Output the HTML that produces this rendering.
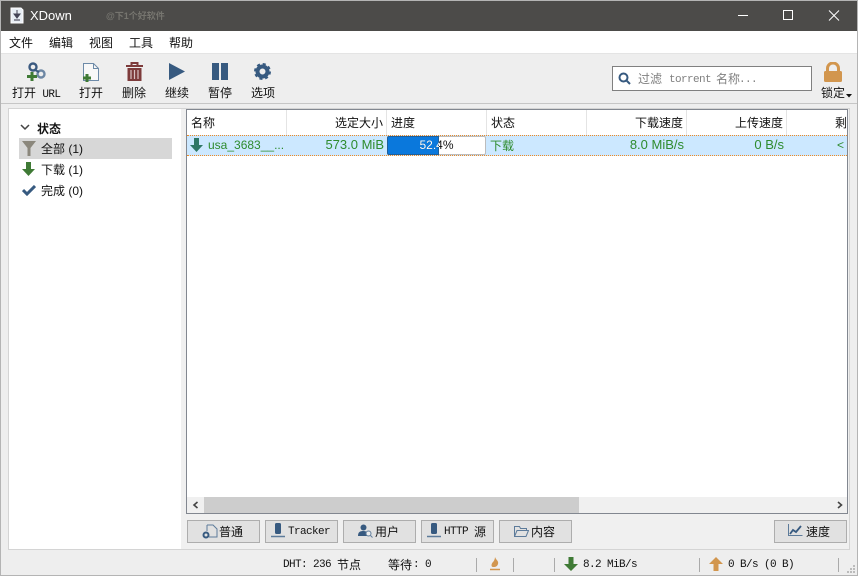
<!DOCTYPE html>
<html><head><meta charset="utf-8">
<style>
html,body{margin:0;padding:0;background:#eee}
#w{position:relative;width:858px;height:576px;overflow:hidden;background:#eee;font-family:"Liberation Sans","Noto Sans CJK SC",sans-serif;font-size:12px;color:#111}
#w div,#w svg{position:absolute}
.t{white-space:nowrap;line-height:16px}
.m{font-family:"Liberation Mono","Noto Sans CJK SC",monospace;font-size:11px;letter-spacing:-.6px}
.c{text-align:center}
.r{text-align:right}
.g{color:#2e8b2e}
.n{font-size:13px}
.hd{top:110px;height:25px;width:1px;background:#e4e4e4}
.btn{top:520px;height:21px;background:#e1e1e1;border:1px solid #adadad;width:71px}
.sep{width:1px;background:#aaa;top:558px;height:14px}
</style></head><body>
<div id="w">
<div style="left:0;top:0;width:858px;height:576px;box-sizing:border-box;border:1px solid #b4b4b4"></div>
<div style="left:1px;top:1px;width:856px;height:30px;background:#4c4b49"></div>
<svg style="left:10px;top:7px" width="14" height="17" viewBox="0 0 14 17"><path d="M1 1h10l2 2v13H1z" fill="#e8eef4" stroke="#fff"/><path d="M7 3v5M4 7l3 4 3-4z" fill="#445" stroke="#445"/><path d="M4 13h6" stroke="#334"/></svg>
<div class="t" style="left:30px;top:8px;color:#fff;font-size:13px">XDown</div>
<div class="t" style="left:106px;top:8px;color:#76756f;font-size:9px;font-weight:bold">@下1个好软件</div>
<svg style="left:730px;top:1px" width="127" height="30" viewBox="0 0 127 30"><path d="M8 14.500h10" stroke="#fff"/><path d="M53.500 9.500h9v9h-9z" fill="none" stroke="#fff"/><path d="M99 9.500l10 10M109 9.500l-10 10" stroke="#fff"/></svg>

<div style="left:1px;top:31px;width:856px;height:22px;background:#fff"></div>
<div style="left:1px;top:53px;width:856px;height:1px;background:#e4e4e4"></div>
<div class="t" style="left:9px;top:35px">文件</div>
<div class="t" style="left:49px;top:35px">编辑</div>
<div class="t" style="left:89px;top:35px">视图</div>
<div class="t" style="left:129px;top:35px">工具</div>
<div class="t" style="left:169px;top:35px">帮助</div>

<svg style="left:26px;top:62px" width="21" height="20" viewBox="0 0 21 20"><circle cx="7" cy="5" r="3.500" fill="none" stroke="#3b5a80" stroke-width="2.400"/><circle cx="15" cy="12" r="3.500" fill="none" stroke="#6d87a4" stroke-width="2.400"/><path d="M9 8l4 2" stroke="#3b5a80" stroke-width="2"/><path d="M6 10v9M1 14.500h10" stroke="#3f7a35" stroke-width="3"/></svg>
<svg style="left:82px;top:62px" width="18" height="20" viewBox="0 0 18 20"><path d="M1.500 1.500h10l5 5v12H1.500z" fill="#f8f8f8" stroke="#6d8aa8"/><path d="M11.500 1.500v5h5" fill="none" stroke="#6d8aa8"/><path d="M5 12v8M1 16h8" stroke="#3f7a35" stroke-width="3"/></svg>
<svg style="left:126px;top:62px" width="17" height="19" viewBox="0 0 17 19"><path d="M0 4h17M5.500 3V1h6v2" stroke="#7d3b3b" stroke-width="2" fill="none"/><path d="M1.500 6h14v13h-14z" fill="#7d3b3b"/><path d="M5 8v9M8.500 8v9M12 8v9" stroke="#d8c2c2" stroke-width="1.200"/></svg>
<svg style="left:169px;top:63px" width="16" height="17" viewBox="0 0 16 17"><path d="M0 0l16 8.500L0 17z" fill="#375a80"/></svg>
<svg style="left:211px;top:63px" width="18" height="17" viewBox="0 0 18 17"><path d="M1 0h7v17H1zM10 0h7v17h-7z" fill="#375a80"/></svg>
<svg style="left:254px;top:63px" width="17" height="17" viewBox="0 0 17 17"><circle cx="8.500" cy="8.500" r="5" fill="none" stroke="#375a80" stroke-width="4"/><circle cx="8.500" cy="8.500" r="7.300" fill="none" stroke="#375a80" stroke-width="2.400" stroke-dasharray="3 2.730"/></svg>
<div class="t" style="left:12px;top:85px">打开 <span class="m" style="margin-left:3px">URL</span></div>
<div class="t" style="left:79px;top:85px">打开</div>
<div class="t" style="left:122px;top:85px">删除</div>
<div class="t" style="left:165px;top:85px">继续</div>
<div class="t" style="left:208px;top:85px">暂停</div>
<div class="t" style="left:251px;top:85px">选项</div>

<div style="left:612px;top:66px;width:198px;height:23px;background:#fff;border:1px solid #808080"></div>
<svg style="left:618px;top:72px" width="13" height="13" viewBox="0 0 13 13"><circle cx="5.500" cy="5.500" r="4" fill="none" stroke="#375a80" stroke-width="2"/><path d="M8.500 8.500l3.500 3.500" stroke="#375a80" stroke-width="2"/></svg>
<div class="t" style="left:638px;top:71px;color:#808080">过滤</div>
<div class="t m" style="left:669px;top:72px;color:#808080">torrent</div>
<div class="t" style="left:716px;top:71px;color:#808080">名称</div>
<div class="t m" style="left:739px;top:72px;color:#808080">...</div>
<svg style="left:824px;top:62px" width="18" height="20" viewBox="0 0 18 20"><path d="M3.500 11V6.500a5.500 5.500 0 0 1 11 0V11" fill="none" stroke="#d2964e" stroke-width="3"/><rect x="0" y="9" width="18" height="11" rx="1.500" fill="#d2964e"/></svg>
<div class="t" style="left:821px;top:85px">锁定</div>
<svg style="left:846px;top:94px" width="6" height="4"><path d="M0 0h6L3 3.500z" fill="#111"/></svg>
<div style="left:1px;top:103px;width:856px;height:1px;background:#c6c6c6"></div>

<div style="left:8px;top:108px;width:842px;height:442px;box-sizing:border-box;background:#fff;border:1px solid #d4d4d4"></div>
<div style="left:181px;top:109px;width:668px;height:440px;background:#f0f0f0"></div>

<svg style="left:20px;top:124px" width="10" height="7"><path d="M1 1l4 4 4-4" fill="none" stroke="#444" stroke-width="1.500"/></svg>
<div class="t" style="left:37px;top:121px;font-weight:bold">状态</div>
<div style="left:19px;top:138px;width:153px;height:21px;background:#d7d7d7"></div>
<svg style="left:22px;top:141px" width="14" height="15" viewBox="0 0 14 15"><path d="M0 0h14L8.500 7v8h-3V7z" fill="#8b877c"/></svg>
<div class="t" style="left:41px;top:141px">全部 (1)</div>
<svg style="left:22px;top:162px" width="13" height="14" viewBox="0 0 13 14"><path d="M4 0h5v7h4l-6.500 7L0 7h4z" fill="#3f7a35"/></svg>
<div class="t" style="left:41px;top:162px">下载 (1)</div>
<svg style="left:22px;top:185px" width="14" height="11" viewBox="0 0 14 11"><path d="M1 5l4 4 8-8" fill="none" stroke="#375a80" stroke-width="3"/></svg>
<div class="t" style="left:41px;top:183px">完成 (0)</div>

<div style="left:186px;top:109px;width:662px;height:405px;box-sizing:border-box;background:#fff;border:1px solid #828790"></div>
<div class="hd" style="left:286px"></div><div class="hd" style="left:386px"></div><div class="hd" style="left:486px"></div><div class="hd" style="left:586px"></div><div class="hd" style="left:686px"></div><div class="hd" style="left:786px"></div>
<div class="t" style="left:191px;top:115px">名称</div>
<div class="t r" style="left:287px;top:115px;width:96px">选定大小</div>
<div class="t" style="left:391px;top:115px">进度</div>
<div class="t" style="left:491px;top:115px">状态</div>
<div class="t r" style="left:587px;top:115px;width:96px">下载速度</div>
<div class="t r" style="left:687px;top:115px;width:96px">上传速度</div>
<div class="t" style="left:835px;top:115px;width:11px;overflow:hidden">剩</div>

<div style="left:187px;top:135px;width:660px;height:21px;box-sizing:border-box;background:#cce8ff;border-top:1px dotted #f08a24;border-bottom:1px dotted #f08a24"></div>
<svg style="left:190px;top:138px" width="13" height="14" viewBox="0 0 13 14"><path d="M4 0h5v7h4l-6.500 7L0 7h4z" fill="#2f7766"/></svg>
<div class="t g" style="left:208px;top:137px;">usa_3683__...</div>
<div class="t r g n" style="left:287px;top:137px;width:97px">573.0 MiB</div>
<div style="left:387px;top:136px;width:99px;height:19px;box-sizing:border-box;background:#fff;border:1px solid #bcbcbc;border-radius:2px"></div>
<div style="left:387px;top:136px;width:52px;height:19px;box-sizing:border-box;background:#0a78dc;border:1px solid #1f5f99;border-radius:2px 0 0 2px"></div>
<div class="t" style="left:387px;top:137px;width:99px;text-align:center;color:#111">52.4%</div>
<div style="left:387px;top:136px;width:52px;height:19px;overflow:hidden"><div class="t" style="left:0;top:1px;width:99px;text-align:center;color:#fff">52.4%</div></div>
<div class="t g" style="left:490px;top:138px">下载</div>
<div class="t r g n" style="left:587px;top:137px;width:97px">8.0 MiB/s</div>
<div class="t r g n" style="left:687px;top:137px;width:97px">0 B/s</div>
<div class="t g" style="left:837px;top:137px">&lt;</div>

<div style="left:187px;top:497px;width:660px;height:16px;background:#f0f0f0"></div>
<div style="left:204px;top:497px;width:375px;height:16px;background:#cdcdcd"></div>
<svg style="left:192px;top:501px" width="8" height="8"><path d="M5.500 1L2 4l3.500 3" fill="none" stroke="#444" stroke-width="1.600"/></svg>
<svg style="left:836px;top:501px" width="8" height="8"><path d="M2 1l3.500 3L2 7" fill="none" stroke="#444" stroke-width="1.600"/></svg>

<div class="btn" style="left:187px"></div>
<div class="btn" style="left:265px"></div>
<div class="btn" style="left:343px"></div>
<div class="btn" style="left:421px"></div>
<div class="btn" style="left:499px"></div>
<div class="btn" style="left:774px"></div>
<svg style="left:202px;top:524px" width="16" height="15" viewBox="0 0 16 15"><path d="M5 1h6l4 4v8H7" fill="none" stroke="#5d7b9a"/><path d="M5 1v6" stroke="#5d7b9a"/><circle cx="4" cy="11" r="2.500" fill="none" stroke="#375a80" stroke-width="2"/></svg>
<div class="t" style="left:219px;top:524px">普通</div>
<svg style="left:271px;top:523px" width="14" height="15" viewBox="0 0 14 15"><rect x="4" y="0" width="6" height="11" rx="1.500" fill="#375a80"/><path d="M0 13.500h14" stroke="#5d7b9a" stroke-width="1.500"/></svg>
<div class="t m" style="left:288px;top:524px">Tracker</div>
<svg style="left:358px;top:524px" width="15" height="14" viewBox="0 0 15 14"><circle cx="5.500" cy="3.500" r="3" fill="#375a80"/><path d="M0 12c0-4 2-5 5.500-5S10 9 10 12z" fill="#375a80"/><circle cx="10.500" cy="9.500" r="2.500" fill="#eee" stroke="#5d7b9a"/><path d="M12.500 11.500l2 2" stroke="#5d7b9a"/></svg>
<div class="t" style="left:375px;top:524px">用户</div>
<svg style="left:427px;top:523px" width="14" height="15" viewBox="0 0 14 15"><rect x="4" y="0" width="6" height="11" rx="1.500" fill="#375a80"/><path d="M0 13.500h14" stroke="#5d7b9a" stroke-width="1.500"/></svg>
<div class="t m" style="left:444px;top:524px">HTTP</div>
<div class="t" style="left:474px;top:524px">源</div>
<svg style="left:514px;top:526px" width="15" height="11" viewBox="0 0 15 11"><path d="M.5 10.500V.5h5l1 2h6v2M.5 10.500l2.500-6h11.500l-2.500 6z" fill="none" stroke="#5d7b9a"/></svg>
<div class="t" style="left:531px;top:524px">内容</div>
<svg style="left:788px;top:524px" width="15" height="13" viewBox="0 0 15 13"><path d="M.5 0v11.500H14.500" fill="none" stroke="#5d7b9a"/><path d="M2 10l3-4 3 2 5-6" fill="none" stroke="#375a80" stroke-width="1.800"/></svg>
<div class="t" style="left:806px;top:524px">速度</div>

<div style="left:1px;top:575px;width:856px;height:1px;background:#b4b4b4"></div>
<div class="t m" style="left:283px;top:557px">DHT: 236</div>
<div class="t" style="left:337px;top:557px">节点</div>
<div class="t" style="left:388px;top:557px">等待</div>
<div class="t m" style="left:413px;top:557px">: 0</div>
<div class="sep" style="left:476px"></div>
<svg style="left:490px;top:557px" width="10" height="14" viewBox="0 0 10 14"><path d="M5 0c1 3 4 4 3 7s-3 3-5 3-2-3 0-5c1-1 2-3 2-5z" fill="#d2964e"/><path d="M0 12.500h10" stroke="#d2964e" stroke-width="1.500"/></svg>
<div class="sep" style="left:513px"></div>
<div class="sep" style="left:554px"></div>
<svg style="left:564px;top:557px" width="14" height="14" viewBox="0 0 14 14"><path d="M4.500 0h5v7h4.500l-7 7-7-7h4.500z" fill="#3f7a35"/></svg>
<div class="t m" style="left:583px;top:557px">8.2 MiB/s</div>
<div class="sep" style="left:699px"></div>
<svg style="left:709px;top:557px" width="14" height="14" viewBox="0 0 14 14"><path d="M4.500 14h5V7h4.500l-7-7-7 7h4.500z" fill="#d2964e"/></svg>
<div class="t m" style="left:728px;top:557px">0 B/s (0 B)</div>
<div class="sep" style="left:838px"></div>
<svg style="left:846px;top:564px" width="10" height="10"><path d="M7 1h2v2H7zM4 4h2v2H4zM7 4h2v2H7zM1 7h2v2H1zM4 7h2v2H4zM7 7h2v2H7z" fill="#bbb"/></svg>
</div>
</body></html>
